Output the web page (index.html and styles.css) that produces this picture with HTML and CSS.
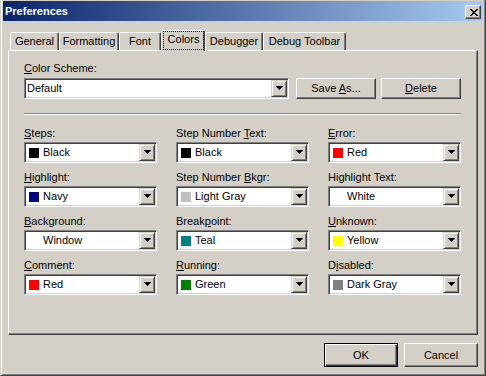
FILE: index.html
```html
<!DOCTYPE html>
<html lang="en">
<head>
  <meta charset="UTF-8">
  <title>Preferences</title>
  <link rel="stylesheet" href="styles.css">
</head>
<body>
  <div class="window">
    <div class="titlebar">
      <span class="title">Preferences</span>
      <span class="close">
        <svg width="8" height="7" viewBox="0 0 8 7" shape-rendering="crispEdges">
          <path d="M0 0h2v1h-2zM6 0h2v1h-2zM1 1h2v1h-2zM5 1h2v1h-2zM2 2h4v1h-4zM3 3h2v1h-2zM2 4h4v1h-4zM1 5h2v1h-2zM5 5h2v1h-2zM0 6h2v1h-2zM6 6h2v1h-2z" fill="#000"/>
        </svg>
      </span>
    </div>

    <div class="content">
      <div class="tabs">
        <div class="tab tab-general">General</div>
        <div class="tab tab-formatting">Formatting</div>
        <div class="tab tab-font">Font</div>
        <div class="tab tab-colors selected"><span class="focus">Colors</span></div>
        <div class="tab tab-debugger">Debugger</div>
        <div class="tab tab-toolbar">Debug Toolbar</div>
      </div>

      <div class="panel">
        <div class="label"><u>C</u>olor Scheme:</div>
        <div class="scheme-row">
          <div class="combo scheme-combo">
            <span class="combo-text plain">Default</span>
            <span class="drop"><svg width="7" height="4" viewBox="0 0 7 4" shape-rendering="crispEdges"><path d="M0 0h7v1h-7zM1 1h5v1h-5zM2 2h3v1h-3zM3 3h1v1h-1z" fill="#000"/></svg></span>
          </div>
          <button class="btn btn-save">Save <u>A</u>s...</button>
          <button class="btn btn-delete"><u>D</u>elete</button>
        </div>

        <div class="separator"></div>

        <div class="color-grid">
          <div class="field">
            <div class="label"><u>S</u>teps:</div>
            <div class="combo"><span class="swatch" style="background:#000000"></span><span class="combo-text">Black</span><span class="drop"><svg width="7" height="4" viewBox="0 0 7 4" shape-rendering="crispEdges"><path d="M0 0h7v1h-7zM1 1h5v1h-5zM2 2h3v1h-3zM3 3h1v1h-1z" fill="#000"/></svg></span></div>
          </div>
          <div class="field">
            <div class="label">Step Number <u>T</u>ext:</div>
            <div class="combo"><span class="swatch" style="background:#000000"></span><span class="combo-text">Black</span><span class="drop"><svg width="7" height="4" viewBox="0 0 7 4" shape-rendering="crispEdges"><path d="M0 0h7v1h-7zM1 1h5v1h-5zM2 2h3v1h-3zM3 3h1v1h-1z" fill="#000"/></svg></span></div>
          </div>
          <div class="field">
            <div class="label"><u>E</u>rror:</div>
            <div class="combo"><span class="swatch" style="background:#ff0000"></span><span class="combo-text">Red</span><span class="drop"><svg width="7" height="4" viewBox="0 0 7 4" shape-rendering="crispEdges"><path d="M0 0h7v1h-7zM1 1h5v1h-5zM2 2h3v1h-3zM3 3h1v1h-1z" fill="#000"/></svg></span></div>
          </div>

          <div class="field">
            <div class="label"><u>H</u>ighlight:</div>
            <div class="combo"><span class="swatch" style="background:#000080"></span><span class="combo-text">Navy</span><span class="drop"><svg width="7" height="4" viewBox="0 0 7 4" shape-rendering="crispEdges"><path d="M0 0h7v1h-7zM1 1h5v1h-5zM2 2h3v1h-3zM3 3h1v1h-1z" fill="#000"/></svg></span></div>
          </div>
          <div class="field">
            <div class="label">Step Number <u>B</u>kgr:</div>
            <div class="combo"><span class="swatch" style="background:#c0c0c0"></span><span class="combo-text">Light Gray</span><span class="drop"><svg width="7" height="4" viewBox="0 0 7 4" shape-rendering="crispEdges"><path d="M0 0h7v1h-7zM1 1h5v1h-5zM2 2h3v1h-3zM3 3h1v1h-1z" fill="#000"/></svg></span></div>
          </div>
          <div class="field">
            <div class="label">Highlight Text:</div>
            <div class="combo"><span class="swatch" style="background:#ffffff"></span><span class="combo-text">White</span><span class="drop"><svg width="7" height="4" viewBox="0 0 7 4" shape-rendering="crispEdges"><path d="M0 0h7v1h-7zM1 1h5v1h-5zM2 2h3v1h-3zM3 3h1v1h-1z" fill="#000"/></svg></span></div>
          </div>

          <div class="field">
            <div class="label"><u>B</u>ackground:</div>
            <div class="combo"><span class="swatch" style="background:#ffffff"></span><span class="combo-text">Window</span><span class="drop"><svg width="7" height="4" viewBox="0 0 7 4" shape-rendering="crispEdges"><path d="M0 0h7v1h-7zM1 1h5v1h-5zM2 2h3v1h-3zM3 3h1v1h-1z" fill="#000"/></svg></span></div>
          </div>
          <div class="field">
            <div class="label">Break<u>p</u>oint:</div>
            <div class="combo"><span class="swatch" style="background:#008080"></span><span class="combo-text">Teal</span><span class="drop"><svg width="7" height="4" viewBox="0 0 7 4" shape-rendering="crispEdges"><path d="M0 0h7v1h-7zM1 1h5v1h-5zM2 2h3v1h-3zM3 3h1v1h-1z" fill="#000"/></svg></span></div>
          </div>
          <div class="field">
            <div class="label"><u>U</u>nknown:</div>
            <div class="combo"><span class="swatch" style="background:#ffff00"></span><span class="combo-text">Yellow</span><span class="drop"><svg width="7" height="4" viewBox="0 0 7 4" shape-rendering="crispEdges"><path d="M0 0h7v1h-7zM1 1h5v1h-5zM2 2h3v1h-3zM3 3h1v1h-1z" fill="#000"/></svg></span></div>
          </div>

          <div class="field">
            <div class="label"><u>C</u>omment:</div>
            <div class="combo"><span class="swatch" style="background:#ff0000"></span><span class="combo-text">Red</span><span class="drop"><svg width="7" height="4" viewBox="0 0 7 4" shape-rendering="crispEdges"><path d="M0 0h7v1h-7zM1 1h5v1h-5zM2 2h3v1h-3zM3 3h1v1h-1z" fill="#000"/></svg></span></div>
          </div>
          <div class="field">
            <div class="label"><u>R</u>unning:</div>
            <div class="combo"><span class="swatch" style="background:#008000"></span><span class="combo-text">Green</span><span class="drop"><svg width="7" height="4" viewBox="0 0 7 4" shape-rendering="crispEdges"><path d="M0 0h7v1h-7zM1 1h5v1h-5zM2 2h3v1h-3zM3 3h1v1h-1z" fill="#000"/></svg></span></div>
          </div>
          <div class="field">
            <div class="label">D<u>i</u>sabled:</div>
            <div class="combo"><span class="swatch" style="background:#808080"></span><span class="combo-text">Dark Gray</span><span class="drop"><svg width="7" height="4" viewBox="0 0 7 4" shape-rendering="crispEdges"><path d="M0 0h7v1h-7zM1 1h5v1h-5zM2 2h3v1h-3zM3 3h1v1h-1z" fill="#000"/></svg></span></div>
          </div>
        </div>
      </div>

      <div class="footer">
        <button class="btn btn-footer default">OK</button>
        <button class="btn btn-footer">Cancel</button>
      </div>
    </div>
  </div>
</body>
</html>
```

FILE: styles.css
```css
body {
  margin: 0;
  background-color: #d4d0c8;
  font-family: "Liberation Sans", Arial, sans-serif;
  font-size: 11px;
  line-height: 13px;
  color: #000;
}

.window {
  width: 486px;
  height: 376px;
  box-sizing: border-box;
  padding: 1px 2px 2px 2px;
  border-left: 1px solid #d4d0c8;
  border-right: 1px solid #404040;
  border-bottom: 1px solid #404040;
  box-shadow: inset 1px 0 #ffffff, inset -1px -1px #808080;
}

/* barra de titulo */
.titlebar {
  height: 20px;
  display: flex;
  align-items: center;
  justify-content: space-between;
  padding: 0 2px;
  background-image: linear-gradient(to right, #0a246a, #a6caf0);
  color: #fff;
  font-weight: bold;
}

.close {
  align-self: flex-start;
  margin-top: 4px;
  width: 16px;
  height: 14px;
  box-sizing: border-box;
  display: flex;
  align-items: center;
  justify-content: center;
  background-color: #d4d0c8;
  border: 1px solid;
  border-color: #ffffff #404040 #404040 #ffffff;
  box-shadow: inset -1px -1px #808080;
}

.close svg {
  display: block;
  margin-left: 1px;
}

.content {
  padding: 0 5px;
}

/* pestanas */
.tabs {
  display: flex;
  align-items: flex-end;
  height: 20px;
  margin: 9px 0 0 2px;
  position: relative;
  z-index: 1;
}

.tab {
  height: 18px;
  box-sizing: border-box;
  padding-top: 2px;
  border: 1px solid;
  border-bottom: none;
  border-color: #ffffff #404040 transparent #ffffff;
  border-radius: 2px 2px 0 0;
  box-shadow: inset -1px 0 #808080;
  background-color: #d4d0c8;
  text-align: center;
  white-space: nowrap;
}

.tab-general { width: 49px; }
.tab-formatting { width: 60px; }
.tab-font { width: 42px; }
.tab-colors { width: 44px; }
.tab-debugger { width: 58px; }
.tab-toolbar { width: 83px; }

.tab.selected {
  height: 21px;
  margin-bottom: -1px;
  padding-top: 0;
}

.focus {
  display: block;
  height: 19px;
  box-sizing: border-box;
  margin-left: 1px;
  padding-top: 1px;
  border: 1px dotted #000;
}

/* panel */
.panel {
  height: 285px;
  box-sizing: border-box;
  padding: 11px 16px 0 15px;
  border: 1px solid;
  border-color: #ffffff #404040 #404040 #ffffff;
  box-shadow: inset -1px -1px #808080;
}

.label {
  height: 13px;
  white-space: nowrap;
}

.scheme-row {
  display: flex;
  margin-top: 3px;
}

.scheme-combo {
  width: 265px;
  margin-right: 7px;
}

.btn {
  box-sizing: border-box;
  padding: 0;
  margin: 0;
  font: inherit;
  color: #000;
  background-color: #d4d0c8;
  border: 1px solid;
  border-color: #ffffff #404040 #404040 #ffffff;
  box-shadow: inset -1px -1px #808080;
}

.btn-save,
.btn-delete {
  width: 80px;
  height: 21px;
}

.btn-save {
  margin-right: 5px;
}

.separator {
  margin-top: 14px;
  border-top: 1px solid #808080;
  border-bottom: 1px solid #ffffff;
}

.color-grid {
  display: grid;
  grid-template-columns: repeat(3, 133px);
  column-gap: 19px;
  row-gap: 8px;
  margin-top: 12px;
}

/* combos */
.combo {
  height: 21px;
  box-sizing: border-box;
  display: flex;
  align-items: center;
  padding: 1px;
  border: 1px solid;
  border-color: #808080 #ffffff #ffffff #808080;
  box-shadow: inset 1px 1px #404040, inset -1px -1px #d4d0c8;
  background-color: #fff;
}

.field .combo {
  margin-top: 2px;
}

.swatch {
  width: 10px;
  height: 10px;
  margin-left: 3px;
  flex: none;
}

.combo-text {
  margin-left: 4px;
  white-space: nowrap;
}

.combo-text.plain {
  margin-left: 1px;
}

.drop {
  margin-left: auto;
  width: 16px;
  height: 17px;
  box-sizing: border-box;
  flex: none;
  display: flex;
  align-items: center;
  justify-content: center;
  background-color: #d4d0c8;
  border: 1px solid;
  border-color: #d4d0c8 #404040 #404040 #d4d0c8;
  box-shadow: inset 1px 1px #ffffff, inset -1px -1px #808080;
}

.drop svg {
  display: block;
  margin-top: -1px;
}

/* botones de abajo */
.footer {
  display: flex;
  justify-content: flex-end;
  gap: 6px;
  margin-top: 8px;
}

.btn-footer {
  width: 74px;
  height: 24px;
}

.btn.default {
  border-color: #000;
  box-shadow: inset 1px 1px #ffffff, inset -1px -1px #404040, inset -2px -2px #808080;
}
```
